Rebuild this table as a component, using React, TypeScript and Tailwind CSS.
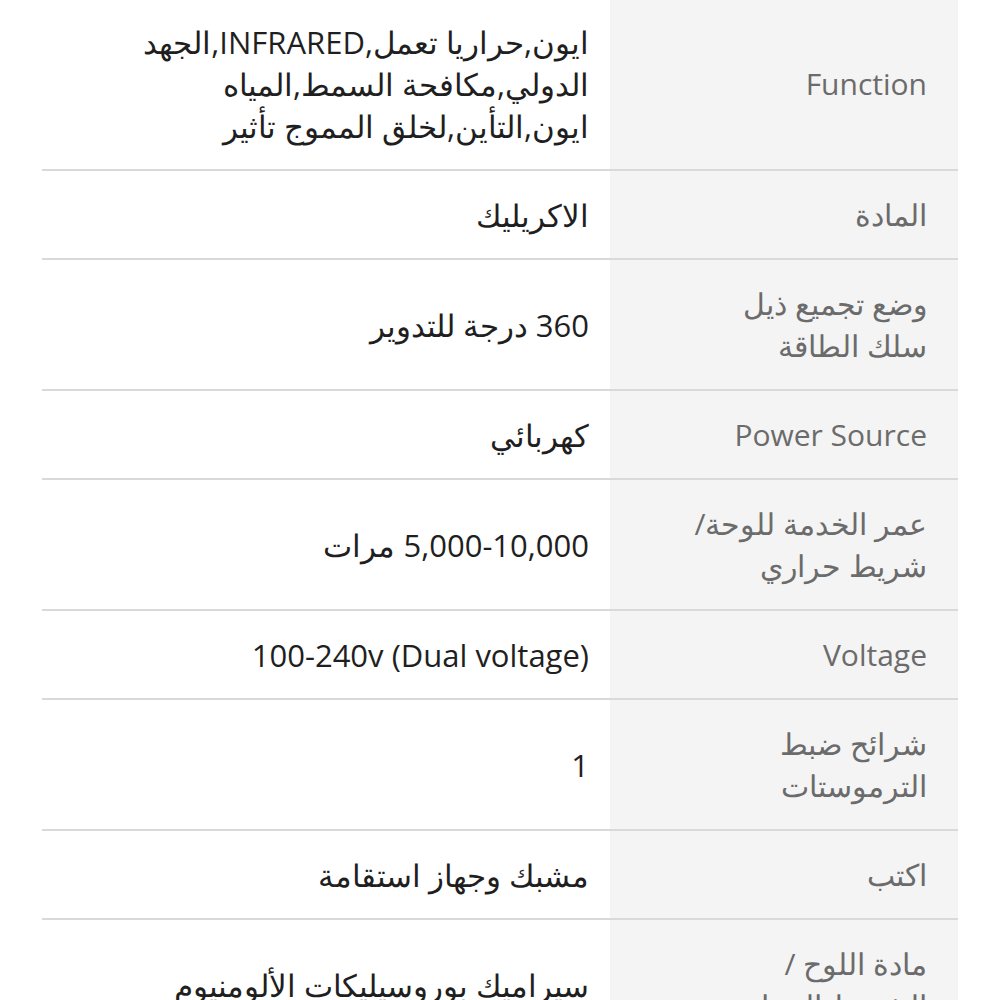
const specs: { label: string[]; value: string[] }[] = [
  {
    label: ["Function"],
    value: ["ايون,حراريا تعمل,INFRARED,الجهد", "الدولي,مكافحة السمط,المياه", "ايون,التأين,لخلق المموج تأثير"],
  },
  { label: ["المادة"], value: ["الاكريليك"] },
  { label: ["وضع تجميع ذيل", "سلك الطاقة"], value: ["360 درجة للتدوير"] },
  { label: ["Power Source"], value: ["كهربائي"] },
  { label: ["عمر الخدمة للوحة/", "شريط حراري"], value: ["5,000-10,000 مرات"] },
  { label: ["Voltage"], value: ["100-240v (Dual voltage)"] },
  { label: ["شرائح ضبط", "الترموستات"], value: ["1"] },
  { label: ["اكتب"], value: ["مشبك وجهاز استقامة"] },
  { label: ["مادة اللوح /", "الشريط الحراري"], value: ["سيراميك بوروسيليكات الألومنيوم"] },
];

export default function App() {
  return (
    <div className="h-[1000px] w-[1000px] overflow-hidden bg-white font-['Open_Sans','Noto_Sans',sans-serif]">
      <div dir="rtl" className="ml-[42px] mt-[-2px] w-[916px]">
        {specs.map((row, i) => (
          <div
            key={i}
            className="grid grid-cols-[348px_568px] border-b-2 border-[#d9d9d9]"
          >
            <div className="flex flex-col justify-center bg-[#f4f4f4] pt-[23px] pb-[22px] pl-4 pr-[31px] text-[30px] leading-[42px] text-[#6b6b6b]">
              {row.label.map((line, j) => (
                <span key={j} className="whitespace-nowrap">{line}</span>
              ))}
            </div>
            <div className="flex flex-col justify-center pt-[23px] pb-[22px] pl-4 pr-[21px] text-[31px] leading-[42px] text-[#1f1f1f]">
              {row.value.map((line, j) => (
                <span key={j} className="whitespace-nowrap">{line}</span>
              ))}
            </div>
          </div>
        ))}
      </div>
    </div>
  );
}
